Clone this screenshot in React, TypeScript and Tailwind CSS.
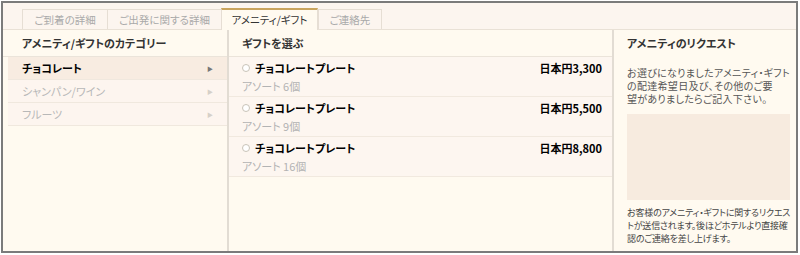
const font = "font-['Noto_Sans_CJK_JP','Noto_Sans',sans-serif] [font-feature-settings:'palt']";

const tabs = [
  { label: "ご到着の詳細", w: "w-[86px]", active: false },
  { label: "ご出発に関する詳細", w: "w-[115px]", active: false },
  { label: "アメニティ/ギフト", w: "w-[97px]", active: true },
  { label: "ご連絡先", w: "w-[64px]", active: false },
];

const categories = [
  { label: "チョコレート", active: true },
  { label: "シャンパン/ワイン", active: false },
  { label: "フルーツ", active: false },
];

const gifts = [
  { name: "チョコレートプレート", sub: "アソート 6個", price: "日本円3,300" },
  { name: "チョコレートプレート", sub: "アソート 9個", price: "日本円5,500" },
  { name: "チョコレートプレート", sub: "アソート 16個", price: "日本円8,800" },
];

export default function App() {
  return (
    <div className={`w-[800px] h-[255px] bg-white pt-px pl-px ${font}`}>
      <div className="flex h-[252px] w-[797px] flex-col border-2 border-[#7b7b7b] bg-[#fffaf0]">
        {/* tabs */}
        <div className="flex h-[27px] items-end border-b border-[#e9e1d6] bg-[#fcf5ef] pl-[19px]">
          {tabs.map((t) => (
            <div
              key={t.label}
              className={
                t.active
                  ? `${t.w} -mb-px flex h-[22px] items-center justify-center border-x border-t-2 border-[#e6ded4] border-t-[#c9a45e] bg-[#fffaf0] text-[10.5px] text-[#333]`
                  : `${t.w} -mr-px flex h-[20px] items-center justify-center border border-b-0 border-[#e6ded4] text-[10.5px] text-[#a9a9a9]`
              }
            >
              {t.label}
            </div>
          ))}
        </div>

        <div className="flex flex-1">
          {/* categories */}
          <div className="w-[226px] shrink-0 border-r-2 border-[#e2dcd3]">
            <div className="flex h-[27px] items-center border-b border-[#ebe4da] pl-[19px] text-[11px] font-bold text-[#333]">
              アメニティ/ギフトのカテゴリー
            </div>
            <div className="pl-[5px]">
              {categories.map((c) => (
                <div
                  key={c.label}
                  className={`flex h-[23px] items-center justify-between border-b border-[#f0e8de] pl-[14px] pr-[14px] text-[11px] ${
                    c.active ? "bg-[#f8ece1] font-bold text-black" : "bg-[#fdf5ef] text-[#b8b8b8]"
                  }`}
                >
                  <span>{c.label}</span>
                  <span className={`text-[6px] ${c.active ? "text-[#777]" : "text-[#d6d0c8]"}`}>▶</span>
                </div>
              ))}
            </div>
          </div>

          {/* gifts */}
          <div className="w-[385px] shrink-0 border-r-2 border-[#e2dcd3]">
            <div className="flex h-[27px] items-center border-b border-[#ebe4da] pl-[13px] text-[11px] font-bold text-[#333]">
              ギフトを選ぶ
            </div>
            {gifts.map((g) => (
              <div key={g.price} className="h-[40px] border-b border-[#f1e9df] bg-[#fdf6f0] pl-[13px] pr-[10px] pt-[3px]">
                <div className="flex items-center justify-between text-[11px] font-bold text-black">
                  <div className="flex items-center gap-[5px]">
                    <span className="h-[8px] w-[8px] rounded-full border border-[#c9c3b8] bg-white" />
                    <span>{g.name}</span>
                  </div>
                  <span>{g.price}</span>
                </div>
                <div className="mt-[2px] text-[11px] leading-[14px] text-[#b3b3b3]">{g.sub}</div>
              </div>
            ))}
          </div>

          {/* request */}
          <div className="min-w-0 flex-1 overflow-hidden pl-[13px] pr-[7px]">
            <div className="flex h-[27px] items-center border-b border-transparent text-[11px] font-bold text-[#333]">
              アメニティのリクエスト
            </div>
            <div className="mt-[9px] whitespace-nowrap text-[10px] leading-[13px] tracking-[0.3px] text-[#555]">
              <div>お選びになりましたアメニティ・ギフト</div>
              <div>の配達希望日及び、その他のご要</div>
              <div>望がありましたらご記入下さい。</div>
            </div>
            <div className="mt-[9px] h-[86px] w-[163px] bg-[#f7ebdf]" />
            <div className="mt-[6px] whitespace-nowrap text-[9px] leading-[13px] tracking-[-0.2px] text-[#444]">
              <div>お客様のアメニティ・ギフトに関するリクエス</div>
              <div>トが送信されます。後ほどホテルより直接確</div>
              <div>認のご連絡を差し上げます。</div>
            </div>
          </div>
        </div>
      </div>
    </div>
  );
}
